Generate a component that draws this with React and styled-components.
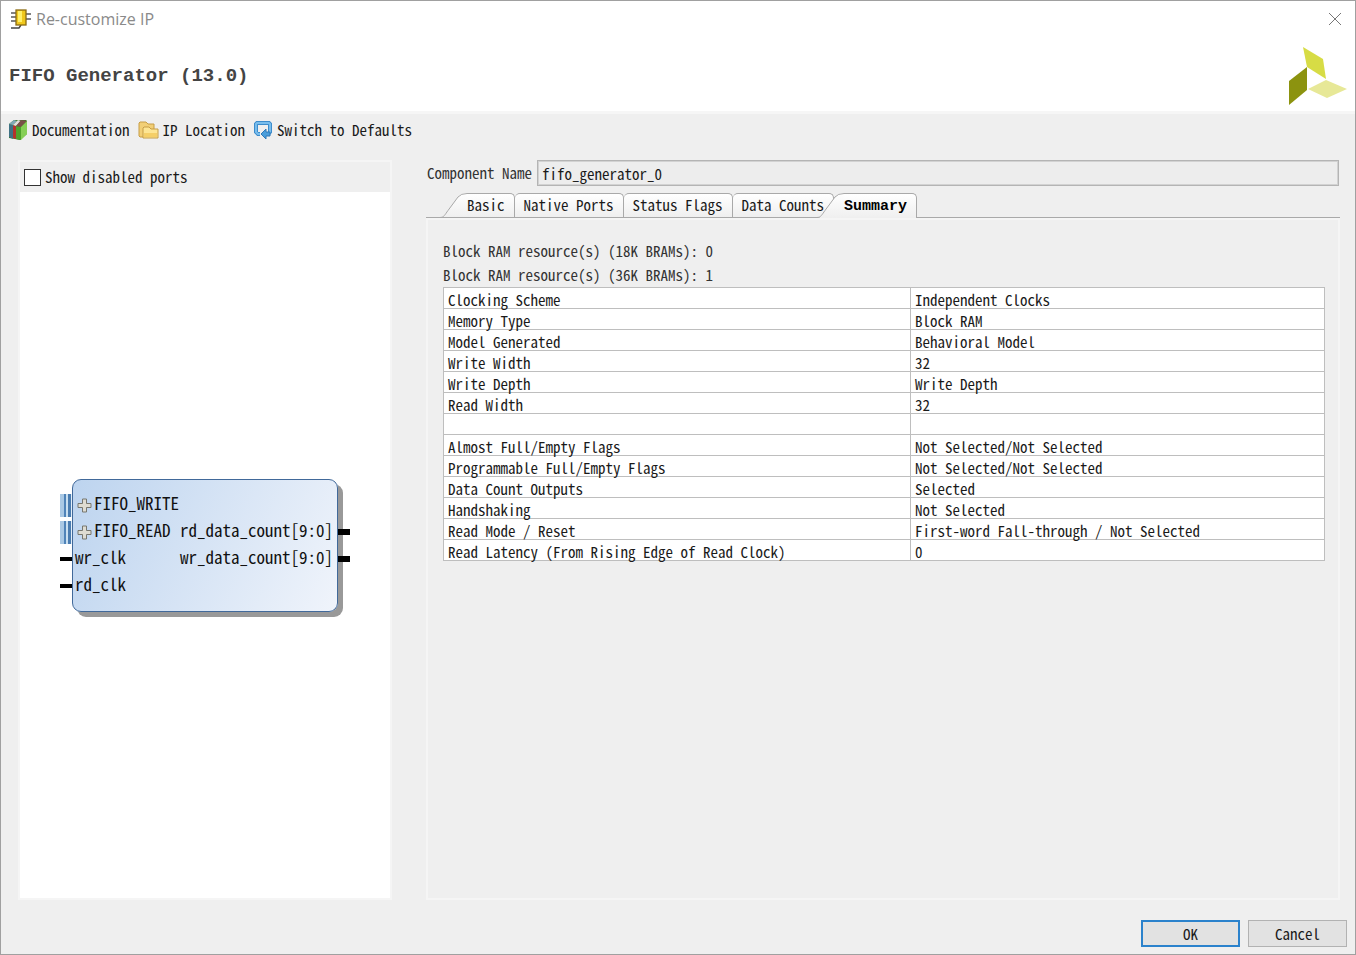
import React, { useState } from 'react';
import styled, { createGlobalStyle, css } from 'styled-components';

const mono = `'Noto Sans Mono CJK SC', 'Liberation Mono', monospace`;
const slab = `'Liberation Mono', monospace`;

const GlobalStyle = createGlobalStyle`
  * {
    box-sizing: border-box;
  }

  body {
    margin: 0;
    background: #efefef;
    color: #1a1a1a;
    font-family: ${mono};
    font-size: 15px;
    line-height: 20px;
  }

  button,
  input {
    font: inherit;
    color: inherit;
  }
`;

const Dialog = styled.div`
  display: flex;
  flex-direction: column;
  min-height: 100vh;
  background: #efefef;
  border: 1px solid #a0a0a0;
`;

const TitleBar = styled.div`
  display: flex;
  align-items: center;
  gap: 4px;
  height: 36px;
  padding: 0 13px 0 9px;
  background: #fff;
`;

const WindowTitle = styled.span`
  flex: 1;
  color: #8a8a8a;
  font-family: 'Open Sans', 'Noto Sans', sans-serif;
  font-size: 16px;
`;

const CloseButton = styled.button`
  display: flex;
  padding: 0;
  border: 0;
  background: none;
`;

const Header = styled.header`
  display: flex;
  align-items: center;
  justify-content: space-between;
  height: 74px;
  padding: 4px 8px 0;
  background: #fff;
`;

const Heading = styled.h1`
  margin: 0;
  color: #444;
  font-family: ${slab};
  font-size: 19px;
  font-weight: 700;
`;

const Toolbar = styled.nav`
  display: flex;
  align-items: center;
  gap: 8px;
  padding: 5px 7px;
  border-top: 3px solid #f6f6f6;
`;

const ToolButton = styled.button`
  display: flex;
  align-items: center;
  gap: 4px;
  padding: 0;
  border: 0;
  background: none;
`;

const Body = styled.main`
  display: flex;
  flex: 1;
  gap: 34px;
  padding: 14px 15px 0 17px;
`;

const PortsPanel = styled.section`
  display: flex;
  flex-direction: column;
  flex: 0 0 374px;
  border: 2px solid #f5f5f5;
`;

const CheckLabel = styled.label`
  display: flex;
  align-items: center;
  gap: 4px;
  height: 30px;
  padding-left: 4px;
`;

const CheckBox = styled.input`
  appearance: none;
  width: 17px;
  height: 17px;
  margin: 0;
  border: 1px solid #333;
  background: #fff;

  &:checked {
    background: #333;
    box-shadow: inset 0 0 0 3px #fff;
  }
`;

const Canvas = styled.div`
  display: flex;
  flex: 1;
  align-items: center;
  justify-content: center;
  background: #fff;
`;

const Symbol = styled.div`
  display: flex;
  color: #111;
  font-size: 17px;
`;

const PinColumn = styled.div`
  display: flex;
  flex-direction: column;
  width: 12px;
  padding-top: 13px;
`;

const PinSlot = styled.div`
  display: flex;
  align-items: center;
  height: 27px;
`;

const Pin = styled.span`
  width: 12px;
  height: ${props => (props.$out ? 6 : 4)}px;
  background: #000;
`;

const BusPin = styled.span`
  width: 12px;
  height: 23px;
  background: linear-gradient(
    to right,
    #a9c8e4 0 4px,
    #4f83b8 4px 6px,
    #c9dff0 6px 8px,
    #4a7cb0 8px 11px,
    #e4effa 11px
  );
`;

const Block = styled.div`
  display: flex;
  justify-content: space-between;
  width: 266px;
  padding: 12px 4px 11px 2px;
  border: 1px solid #41699a;
  border-radius: 9px;
  background: linear-gradient(115deg, #bdd4ef, #f0f4fb);
  box-shadow: 5px 5px 0 #999;
`;

const PortColumn = styled.div`
  display: flex;
  flex-direction: column;
  align-items: flex-start;
  padding-top: ${props => (props.$out ? 27 : 0)}px;
`;

const Port = styled.div`
  display: flex;
  align-items: center;
  gap: 2px;
  height: 27px;
  padding-left: ${props => (props.$bus ? 2 : 0)}px;
`;

const PortName = styled.span`
  padding-bottom: 4px;
  white-space: nowrap;
`;

const ConfigPanel = styled.section`
  display: flex;
  flex: 1;
  flex-direction: column;
  min-width: 0;
`;

const NameRow = styled.div`
  display: flex;
  align-items: center;
  gap: 5px;
  padding: 0 1px;
`;

const NameLabel = styled.label`
  color: #333;
`;

const NameInput = styled.input`
  flex: 1;
  min-width: 0;
  height: 26px;
  padding: 0 4px;
  border: 1px solid #b4b4b4;
  outline: 1px solid #d2d2d2;
  outline-offset: -2px;
  background: #ededed;
`;

const TabStrip = styled.div`
  display: flex;
  height: 25px;
  margin-top: 7px;
  padding-left: 14px;
  border-bottom: 1px solid #a9a9a9;
`;

const TabButton = styled.button`
  display: flex;
  flex: none;
  height: 24px;
  padding: 0;
  border: 0;
  background: none;
  overflow: hidden;

  ${props =>
    props.$active &&
    css`
      z-index: 1;
      height: 25px;
      margin-left: -17px;
      font-family: ${slab};
      font-weight: 700;
      color: #000;
    `}
`;

const TabText = styled.span`
  align-self: stretch;
  padding: ${props => (props.$active ? 3 : 1)}px 9px 0 ${props => (props.$slanted ? 0 : 9)}px;
  border: solid #a9a9a9;
  border-width: 1px 1px 0 0;
  border-radius: ${props => (props.$slanted ? 0 : 5)}px 5px 0 0;
  background: linear-gradient(#fff, #efefef);
  white-space: nowrap;
`;

const TabPanel = styled.div`
  flex: 1;
  padding: 19px 13px 0 15px;
  border: 2px solid #f5f5f5;
`;

const Resource = styled.p`
  margin: 0;
  line-height: 24px;
  color: #333;
`;

const SummaryTable = styled.table`
  width: 100%;
  border-collapse: collapse;
  table-layout: fixed;
  background: #fff;
`;

const Cell = styled.td`
  width: ${props => (props.$name ? '53%' : 'auto')};
  padding: 0 4px;
  border: 1px solid #bebebe;
`;

const CellText = styled.div`
  height: 20px;
  line-height: 24px;
  white-space: nowrap;
`;

const Footer = styled.footer`
  display: flex;
  justify-content: flex-end;
  gap: 8px;
  padding: 20px 8px 7px;
`;

const DialogButton = styled.button`
  width: 99px;
  height: 27px;
  padding: 0;
  border: ${props => (props.$primary ? '2px solid #2b82cc' : '1px solid #b2b2b2')};
  background: #e2e2e2;
`;

const ChipIcon = () => (
  <svg width="22" height="22" viewBox="0 0 22 22">
    <path d="M1 5h5M1 9h5M1 13h5M16 6h5M16 11h5" stroke="#5a5a5a" strokeWidth="1.4" />
    <path d="M1 20h8l2-3" stroke="#444" strokeWidth="1.4" fill="none" />
    <rect x="6" y="2" width="10" height="15" fill="#f0c81c" stroke="#8b6b12" strokeWidth="1.3" />
    <rect x="8" y="3" width="4" height="11" fill="#fff06a" />
  </svg>
);

const BooksIcon = () => (
  <svg width="20" height="22" viewBox="0 0 20 22">
    <path d="M1 5l5-4h12l1 1v13l-7 6-5-1-6-1z" fill="#3c7a26" />
    <path d="M1 5l4 1v14l-4-2z" fill="#3f7285" />
    <path d="M1 5l5-4 3 1-4 4z" fill="#7fa9b8" />
    <path d="M5 6l3 1v13l-3-1z" fill="#b5332c" />
    <path d="M5 6l5-5 3 1-5 5z" fill="#e3e0dc" />
    <path d="M8 7l5 1v13l-5-1z" fill="#4ea32c" />
    <path d="M8 7l5-6 6 1-6 6z" fill="#7a5148" />
    <path d="M13 8l6-6v13l-6 6z" fill="#86cf55" />
  </svg>
);

const FolderIcon = () => (
  <svg width="21" height="20" viewBox="0 0 21 20">
    <path d="M1 16V3l1-1h6l2 2h6v13H2z" fill="#f2cf76" stroke="#c69d47" />
    <path d="M5 18V8l1-1h5l2 2h7v9z" fill="#fde594" stroke="#c69d47" />
    <path d="M6 13h13v4H6z" fill="#f5cf68" />
  </svg>
);

const SwitchIcon = () => (
  <svg width="20" height="20" viewBox="0 0 20 20">
    <path d="M7 14H5l-2-2V4l1-1h12l1 1v8l-2 2" fill="none" stroke="#3c8ccc" strokeWidth="4" />
    <path d="M7 14H5l-2-2V4l1-1h12l1 1v8l-2 2" fill="none" stroke="#79bdec" strokeWidth="2" />
    <path d="M13 9v3h4v4h-4v3l-5-5z" fill="#4a9edb" stroke="#2f79b8" />
  </svg>
);

const PlusIcon = () => (
  <svg width="15" height="15" viewBox="0 0 15 15">
    <path d="M5.5 1h4v4.5H14v4H9.5V14h-4V9.500H1v-4h4.500z" fill="#dedcd2" stroke="#77776f" />
  </svg>
);

const Logo = () => (
  <svg width="58" height="58" viewBox="0 0 58 58">
    <path d="M14 0l20 12 3 20-19-12z" fill="#d7dc45" />
    <path d="M0 34l18-14v23L0 58z" fill="#8c930f" />
    <path d="M19 42l18-9 21 9-20 9z" fill="#e7e897" />
  </svg>
);

const Slant = () => (
  <svg width="27" height="25" viewBox="0 0 27 25">
    <defs>
      <linearGradient id="tab-fill" x1="0" y1="0" x2="0" y2="1">
        <stop offset="0" stopColor="#fff" />
        <stop offset="1" stopColor="#efefef" />
      </linearGradient>
    </defs>
    <path d="M0 25c4 0 5-3 8-7L18 4q3-4 9-4v25z" fill="url(#tab-fill)" />
    <path d="M0 24.500c4 0 5-3 8-7L18 4q3-3.500 9-3.500" fill="none" stroke="#a9a9a9" />
  </svg>
);

const tabs = ['Basic', 'Native Ports', 'Status Flags', 'Data Counts', 'Summary'];
const activeTab = 'Summary';

const summary = [
  ['Clocking Scheme', 'Independent Clocks'],
  ['Memory Type', 'Block RAM'],
  ['Model Generated', 'Behavioral Model'],
  ['Write Width', '32'],
  ['Write Depth', 'Write Depth'],
  ['Read Width', '32'],
  ['', ''],
  ['Almost Full/Empty Flags', 'Not Selected/Not Selected'],
  ['Programmable Full/Empty Flags', 'Not Selected/Not Selected'],
  ['Data Count Outputs', 'Selected'],
  ['Handshaking', 'Not Selected'],
  ['Read Mode / Reset', 'First-word Fall-through / Not Selected'],
  ['Read Latency (From Rising Edge of Read Clock)', '0'],
];

const Tab = ({ label }) => {
  const active = label === activeTab;
  const slanted = active || label === tabs[0];

  return (
    <TabButton role="tab" aria-selected={active} $active={active}>
      {slanted && <Slant />}
      <TabText $slanted={slanted} $active={active}>{label}</TabText>
    </TabButton>
  );
};

const App = () => {
  const [showDisabled, setShowDisabled] = useState(false);

  return (
    <Dialog>
      <GlobalStyle />
      <TitleBar>
        <ChipIcon />
        <WindowTitle>Re-customize IP</WindowTitle>
        <CloseButton aria-label="Close">
          <svg width="14" height="14" viewBox="0 0 14 14">
            <path d="M1 1l12 12M13 1L1 13" stroke="#777" />
          </svg>
        </CloseButton>
      </TitleBar>
      <Header>
        <Heading>FIFO Generator (13.0)</Heading>
        <Logo />
      </Header>
      <Toolbar>
        <ToolButton><BooksIcon />Documentation</ToolButton>
        <ToolButton><FolderIcon />IP Location</ToolButton>
        <ToolButton><SwitchIcon />Switch to Defaults</ToolButton>
      </Toolbar>
      <Body>
        <PortsPanel>
          <CheckLabel>
            <CheckBox
              type="checkbox"
              checked={showDisabled}
              onChange={e => setShowDisabled(e.target.checked)}
            />
            Show disabled ports
          </CheckLabel>
          <Canvas>
            <Symbol>
              <PinColumn>
                <PinSlot><BusPin /></PinSlot>
                <PinSlot><BusPin /></PinSlot>
                <PinSlot><Pin /></PinSlot>
                <PinSlot><Pin /></PinSlot>
              </PinColumn>
              <Block>
                <PortColumn>
                  <Port $bus><PlusIcon /><PortName>FIFO_WRITE</PortName></Port>
                  <Port $bus><PlusIcon /><PortName>FIFO_READ</PortName></Port>
                  <Port><PortName>wr_clk</PortName></Port>
                  <Port><PortName>rd_clk</PortName></Port>
                </PortColumn>
                <PortColumn $out>
                  <Port><PortName>rd_data_count[9:0]</PortName></Port>
                  <Port><PortName>wr_data_count[9:0]</PortName></Port>
                </PortColumn>
              </Block>
              <PinColumn>
                <PinSlot />
                <PinSlot><Pin $out /></PinSlot>
                <PinSlot><Pin $out /></PinSlot>
              </PinColumn>
            </Symbol>
          </Canvas>
        </PortsPanel>
        <ConfigPanel>
          <NameRow>
            <NameLabel htmlFor="component-name">Component Name</NameLabel>
            <NameInput id="component-name" defaultValue="fifo_generator_0" />
          </NameRow>
          <TabStrip role="tablist">
            {tabs.map(label => (
              <Tab key={label} label={label} />
            ))}
          </TabStrip>
          <TabPanel role="tabpanel">
            <Resource>Block RAM resource(s) (18K BRAMs): 0</Resource>
            <Resource>Block RAM resource(s) (36K BRAMs): 1</Resource>
            <SummaryTable>
              <tbody>
                {summary.map(([name, value], index) => (
                  <tr key={index}>
                    <Cell $name><CellText>{name}</CellText></Cell>
                    <Cell><CellText>{value}</CellText></Cell>
                  </tr>
                ))}
              </tbody>
            </SummaryTable>
          </TabPanel>
        </ConfigPanel>
      </Body>
      <Footer>
        <DialogButton $primary>OK</DialogButton>
        <DialogButton>Cancel</DialogButton>
      </Footer>
    </Dialog>
  );
};

export default App;
